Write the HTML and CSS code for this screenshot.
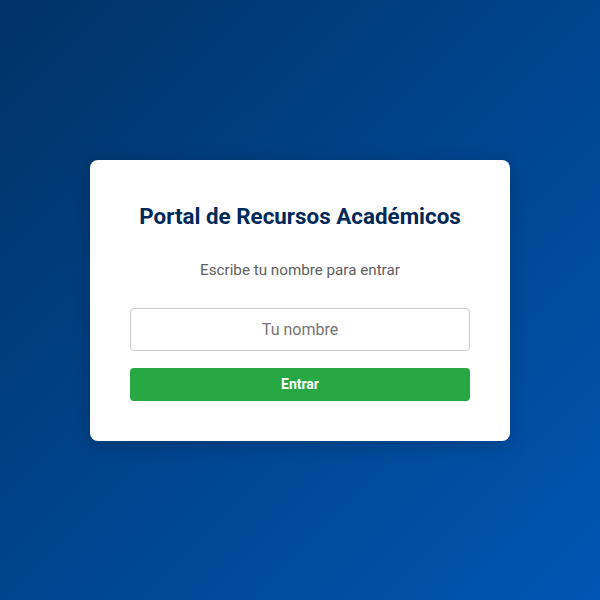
FILE: index.html
```html
<!DOCTYPE html>
<html lang="es">
<head>
<meta charset="utf-8">
<title>Portal de Recursos Académicos</title>
<link rel="stylesheet" href="styles.css">
</head>
<body>
<main class="page">
  <div class="card">
    <h1 class="title">Portal de Recursos Académicos</h1>
    <p class="subtitle">Escribe tu nombre para entrar</p>
    <input class="name-input" type="text" placeholder="Tu nombre">
    <button class="enter-btn" type="button">Entrar</button>
  </div>
</main>
</body>
</html>
```

FILE: styles.css
```css
html, body {
  margin: 0;
  padding: 0;
  height: 100%;
}
body {
  font-family: Roboto, "Liberation Sans", sans-serif;
  background: linear-gradient(135deg, #003366 0%, #0056b3 100%);
}
.page {
  height: 600px;
  display: flex;
  align-items: center;
  justify-content: center;
}
.card {
  width: 420px;
  box-sizing: border-box;
  padding: 40px;
  background: #ffffff;
  border-radius: 8px;
  box-shadow: 0 4px 20px rgba(0, 0, 0, 0.2);
  display: flex;
  flex-direction: column;
  align-items: stretch;
  text-align: center;
}
.title {
  margin: 3px 0 0;
  font-size: 22.4px;
  line-height: 27px;
  font-weight: 700;
  color: #00295a;
}
.subtitle {
  margin: 31px 0 0;
  font-size: 15.2px;
  line-height: 19px;
  color: #606060;
}
.name-input {
  margin-top: 28px;
  box-sizing: border-box;
  height: 43px;
  padding: 0 12px;
  border: 1px solid #cccccc;
  border-radius: 4px;
  font-family: Roboto, "Liberation Sans", sans-serif;
  font-size: 16px;
  text-align: center;
  color: #333333;
  outline: none;
}
.name-input::placeholder {
  color: #757575;
}
.enter-btn {
  margin-top: 17px;
  height: 33px;
  border: none;
  border-radius: 4px;
  background: #28a745;
  color: #ffffff;
  font-family: Roboto, "Liberation Sans", sans-serif;
  font-size: 14px;
  font-weight: 700;
  cursor: pointer;
}
```
